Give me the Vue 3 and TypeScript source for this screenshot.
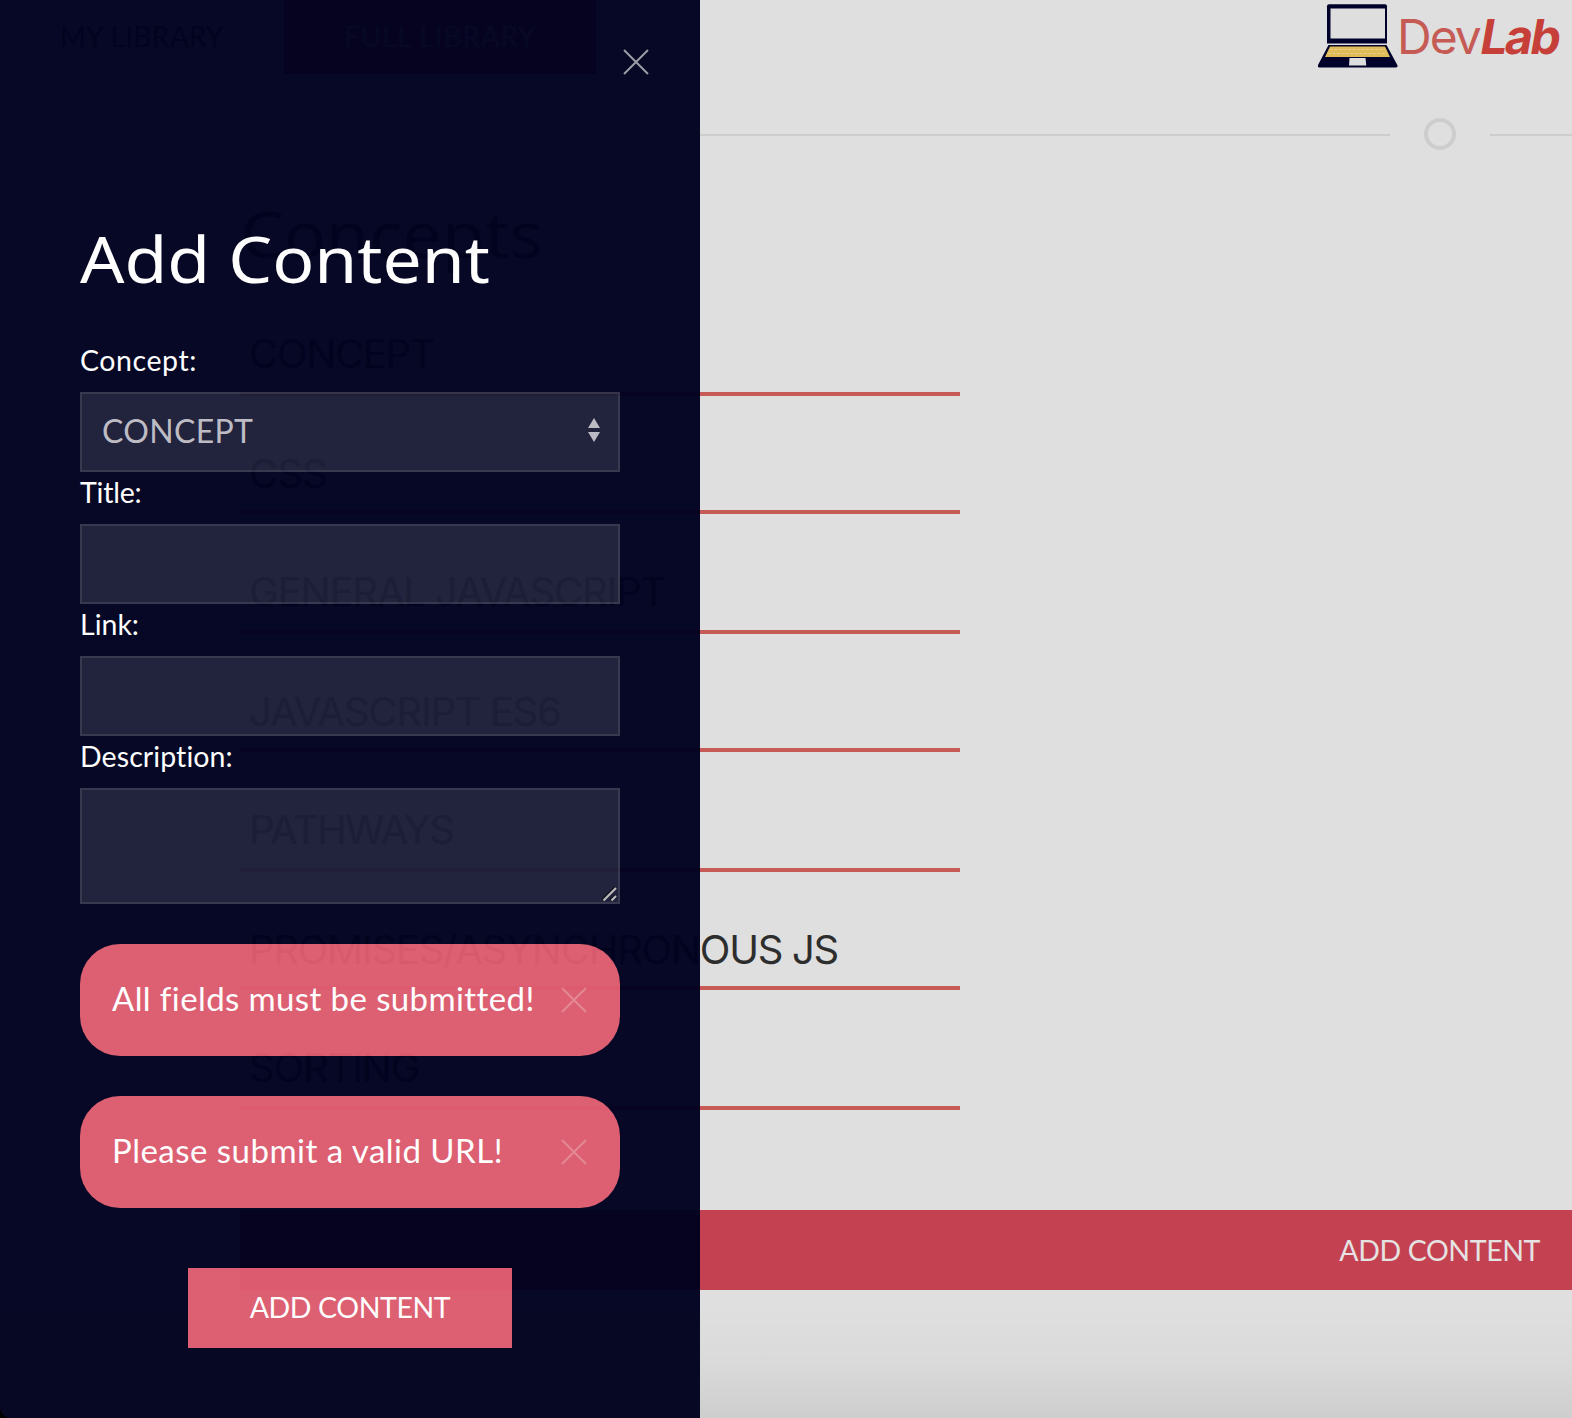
<script setup lang="ts">
import { ref } from 'vue'

interface Topic { name: string; width: number }
interface Notice { text: string; width: number }

const topics: Topic[] = [
  { name: 'CONCEPT', width: 187 },
  { name: 'CSS', width: 79 },
  { name: 'GENERAL JAVASCRIPT', width: 417 },
  { name: 'JAVASCRIPT ES6', width: 313 },
  { name: 'PATHWAYS', width: 206 },
  { name: 'PROMISES/ASYNCHRONOUS JS', width: 590 },
  { name: 'SORTING', width: 172 },
]
const notices = ref<Notice[]>([
  { text: 'All fields must be submitted!', width: 421 },
  { text: 'Please submit a valid URL!', width: 391 },
])
const title = ref('')
const link = ref('')
const description = ref('')

// Tracks a label out (or in) so that it spans the given width.
const vTrack = {
  mounted(el: HTMLElement, binding: { value: number }) {
    const count = (el.textContent ?? '').length
    const natural = el.offsetWidth
    el.style.letterSpacing = `${(binding.value - natural) / (count - 1)}px`
  },
}
</script>

<template>
  <div class="app">
    <div class="page">
      <header class="top">
        <nav class="tabs">
          <a class="tab"><span v-track="164">MY LIBRARY</span></a>
          <a class="tab active"><span v-track="192">FULL LIBRARY</span></a>
        </nav>
        <div class="brand">
          <svg class="laptop" width="80" height="76" viewBox="0 0 80 76">
            <path d="M11 4.300h56a2 2 0 0 1 2 2V43.500H9V6.300a2 2 0 0 1 2-2z" fill="#00022b" />
            <path d="M12.500 8.500h54.500v30H12.500z" fill="#dedede" />
            <path d="M10.500 45h58l10.800 20a1.600 1.600 0 0 1-1.500 2.500H1A1.600 1.600 0 0 1 0 65z" fill="#00022b" />
            <path d="M12 46.500h55l5 10.500H7z" fill="#e0bb58" />
            <path d="M12 49.500h55M10 53.500h59" stroke="#e5cd8c" stroke-width="1" stroke-dasharray="3 1.500" fill="none" />
            <path d="M31.500 58h16l.8 7.500H31z" fill="#dedede" />
          </svg>
          <span class="dev"><span v-track="85">Dev</span></span><span class="lab"><span v-track="80">Lab</span></span>
        </div>
      </header>
      <div class="divider"><i class="rule"></i><b class="ring"></b><i class="rule end"></i></div>
      <main class="content">
        <h1><span>Concepts</span></h1>
        <ul>
          <li v-for="t in topics" :key="t.name"><span v-track="t.width">{{ t.name }}</span></li>
        </ul>
        <div class="bar"><span v-track="201">ADD CONTENT</span></div>
      </main>
      <div class="fade"></div>
    </div>

    <aside class="panel">
      <button class="close" aria-label="Close">
        <svg width="28" height="28" viewBox="0 0 28 28"><path d="M2 2l24 24M26 2L2 26" /></svg>
      </button>
      <h2><span>Add Content</span></h2>
      <form @submit.prevent>
        <label><span v-track="116">Concept:</span></label>
        <div class="field select">
          <span v-track="151">CONCEPT</span>
          <svg width="12" height="24" viewBox="0 0 12 24"><path d="M6 0l6 10H0zM0 14h12L6 24z" /></svg>
        </div>
        <label><span v-track="62">Title:</span></label>
        <input v-model="title" class="field" type="text">
        <label><span v-track="59">Link:</span></label>
        <input v-model="link" class="field" type="text">
        <label><span v-track="153">Description:</span></label>
        <div class="area">
          <textarea v-model="description" class="field"></textarea>
          <svg class="grip" width="16" height="16" viewBox="0 0 16 16">
            <path class="dark" d="M0 14L13 1M8 14l5-5" />
            <path class="light" d="M1.500 14.500L14 2M9.500 14.500l4.500-4.500" />
          </svg>
        </div>
        <div v-for="n in notices" :key="n.text" class="alert">
          <span v-track="n.width">{{ n.text }}</span>
          <svg width="28" height="28" viewBox="0 0 28 28"><path d="M2 2l24 24M26 2L2 26" /></svg>
        </div>
        <button class="submit"><span v-track="201">ADD CONTENT</span></button>
      </form>
    </aside>
    <div class="corner"></div>
  </div>
</template>

<style>
body { margin: 0; }
</style>

<style scoped>
* { box-sizing: border-box; }
.app {
  position: relative;
  width: 1572px;
  height: 1418px;
  overflow: hidden;
  font-family: Lato, sans-serif;
  font-optical-sizing: none;
  background: #dfdfdf;
}
span { white-space: nowrap; }
.page { height: 1418px; position: relative; }
.top { height: 118px; display: flex; justify-content: space-between; align-items: flex-start; }
.tabs { display: flex; }
.tab {
  height: 74px;
  line-height: 72px;
  padding: 0 60px;
  width: 284px;
  font-size: 28px;
  color: #2d2d2d;
}
.tab.active { width: 312px; background: #c44152; color: #dfdfdf; }
.brand { display: flex; width: 254px; font-family: Inter, sans-serif; font-size: 48px; line-height: 74px; }
.laptop { flex: none; }
.dev { width: 84px; margin-left: -1px; color: #c65b55; font-weight: 400; }
.lab { margin-left: 0; color: #c64039; font-weight: 700; transform: skewX(-10deg); }
.divider { height: 32px; display: flex; align-items: center; }
.rule { width: 1390px; height: 2px; margin-top: 2px; background: #cdcdcd; }
.rule.end { width: 82px; }
.ring { width: 32px; height: 32px; margin: 0 34px; border: 4px solid #cdcdcd; border-radius: 50%; }
.content { padding-left: 240px; }
h1, h2 { margin: 0; font-family: "Noto Sans", sans-serif; font-weight: 400; font-size: 63px; }
h1 { height: 128px; line-height: 88px; padding-top: 40px; color: #2d2d2d; }
h1 span, h2 span { display: inline-block; transform: scaleX(1.105); transform-origin: 0 50%; }
ul { margin: 0; padding: 0; list-style: none; width: 720px; }
li {
  height: 120px;
  padding: 0 9px 18px;
  display: flex;
  align-items: flex-end;
  line-height: 40px;
  font-family: Inter, sans-serif;
  font-size: 40px;
  font-weight: 425;
  color: #2d2d2d;
  border-bottom: 4px solid #c65b55;
}
li:first-child { height: 118px; }
li:nth-child(even) { height: 118px; padding-bottom: 16px; }
.bar {
  height: 80px;
  margin-top: 100px;
  padding-right: 32px;
  text-align: right;
  line-height: 80px;
  font-size: 28.500px;
  color: #e5e2e2;
  background: #c44152;
}
.fade {
  position: absolute;
  inset: auto 0 0;
  height: 110px;
  background: linear-gradient(rgba(0,0,0,0), rgba(0,0,0,.025) 50%, rgba(0,0,0,.08));
}
.panel {
  position: absolute;
  top: 0;
  left: 0;
  width: 700px;
  height: 1418px;
  padding: 48px 80px 0;
  background: #00021f;
  opacity: .97;
  color: #fff;
}
.close { display: block; width: 28px; height: 28px; margin: 0 0 0 542px; padding: 0; border: 0; background: none; }
.close svg, .alert svg { display: block; fill: none; stroke: #fff; stroke-width: 2; }
.close svg { opacity: .6; }
h2 { height: 96px; margin-top: 136px; line-height: 93px; }
label { display: flex; align-items: center; height: 52px; padding-bottom: 13px; font-size: 28.500px; }
form { padding-top: 32px; }
.field {
  display: block;
  width: 540px;
  height: 80px;
  margin: 0;
  padding: 0 20px;
  border: 2px solid rgba(255,255,255,.1);
  border-radius: 0;
  background: rgba(255,255,255,.11);
  color: #bcbbc4;
  font: 32px Lato, sans-serif;
}
.select { display: flex; align-items: center; justify-content: space-between; padding-right: 18px; padding-bottom: 4px; }
.select svg { fill: #bcbbc4; margin-top: 0; }
.area { position: relative; }
textarea.field { height: 116px; resize: none; }
.grip { position: absolute; right: 2px; bottom: 2px; fill: none; stroke-width: 2; }
.grip .dark { stroke: #10101a; }
.grip .light { stroke: #bdbdbd; }
.alert {
  height: 112px;
  margin-top: 40px;
  padding: 0 32px;
  display: flex;
  align-items: center;
  justify-content: space-between;
  border-radius: 40px;
  background: #dd5c6f;
  font-size: 33px;
}
.alert > span { margin-top: -5px; }
.alert svg { opacity: .25; }
.submit {
  display: block;
  width: 324px;
  height: 80px;
  margin: 60px auto 0;
  padding: 0 0 2px;
  border: 0;
  background: #dd5c6f;
  color: #fff;
  font: 28.500px Lato, sans-serif;
}
/* Rounded window edge at the bottom left. */
.corner {
  position: absolute;
  left: 0;
  bottom: 0;
  width: 10px;
  height: 10px;
  background: radial-gradient(circle at 100% 0, transparent 9.500px, #000 10px);
}
</style>
